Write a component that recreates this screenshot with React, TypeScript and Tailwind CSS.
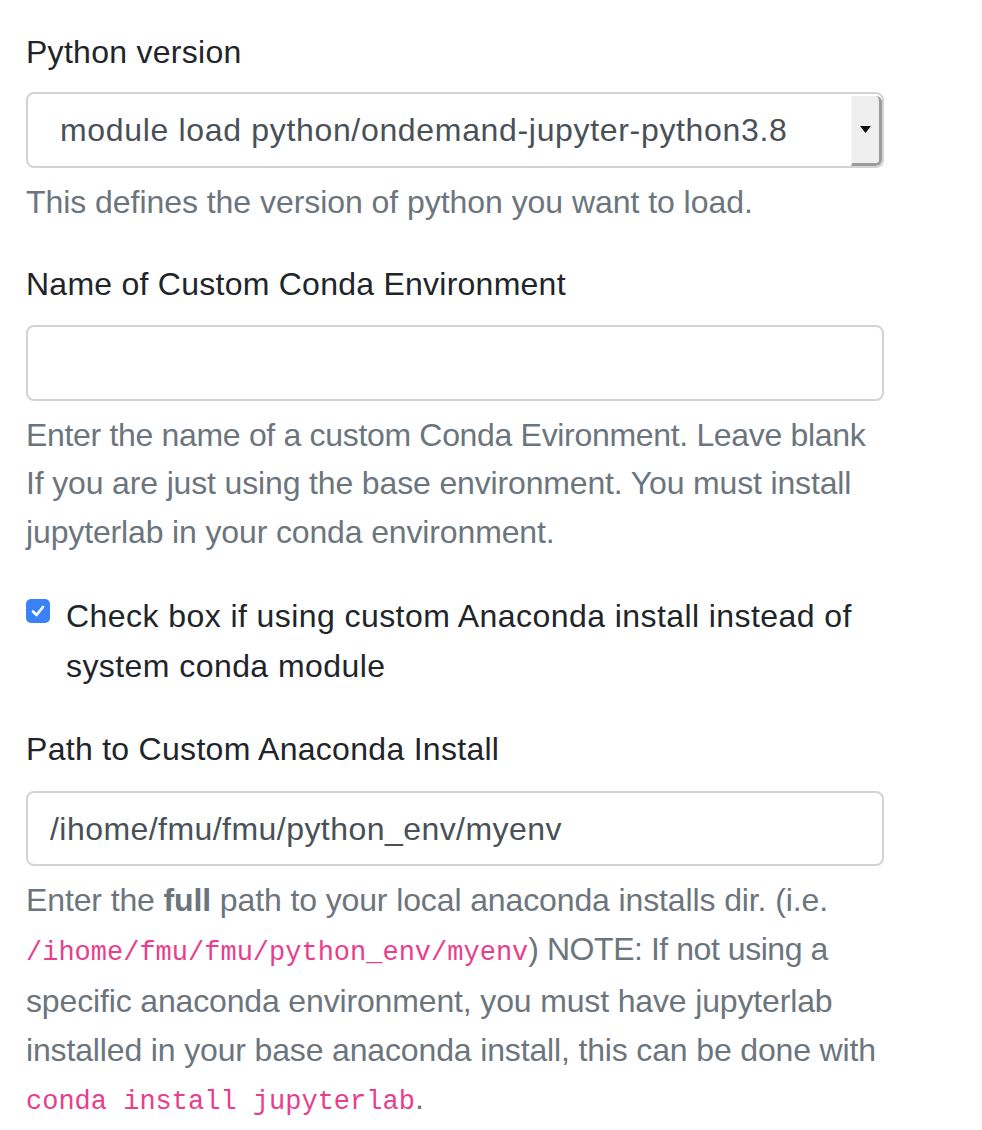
import React from "react";

const codeCls =
  "font-['Liberation_Mono','DejaVu_Sans_Mono',monospace] text-[27px] text-[#e83e8c] tracking-normal";

export default function App() {
  return (
    <div className="min-h-[1130px] w-[982px] bg-white pl-[26px] pt-[28px] font-['Liberation_Sans',Arial,sans-serif] text-[32px] leading-[48px] text-[#212529]">
      {/* Python version */}
      <label className="block tracking-[0.28px]">Python version</label>
      <div className="mt-[16px] flex h-[76px] w-[858px] overflow-hidden rounded-[8px] border-2 border-[#d0d4d9] bg-white">
        <div className="flex flex-1 items-center pl-[32px] tracking-[0.67px] text-[#495057]">
          module load python/ondemand-jupyter-python3.8
        </div>
        <div className="mt-[2px] flex w-[31px] items-center justify-center rounded-r-[6px] border-b-[3px] border-r-[3px] border-l border-l-[#f7f7f7] border-b-[#9c9c9c] border-r-[#9c9c9c] bg-[#efefef]">
          <svg width="11" height="7" viewBox="0 0 11 7">
            <path d="M0 0 L11 0 L5.5 7 Z" fill="#111" />
          </svg>
        </div>
      </div>
      <p className="mt-[10px] leading-[48.5px] tracking-[-0.05px] text-[#6c757d]">
        This defines the version of python you want to load.
      </p>

      {/* Conda env */}
      <label className="mt-[33px] block tracking-[0.25px]">Name of Custom Conda Environment</label>
      <div className="mt-[17px] h-[76px] w-[858px] rounded-[8px] border-2 border-[#d0d4d9] bg-white" />
      <p className="mt-[10px] w-[900px] leading-[48.5px] text-[#6c757d]">
        <span className="tracking-[-0.32px]">Enter the name of a custom Conda Evironment. Leave blank</span>
        <br />
        <span className="tracking-[-0.15px]">If you are just using the base environment. You must install</span>
        <br />
        <span className="tracking-[-0.14px]">jupyterlab in your conda environment.</span>
      </p>

      {/* Checkbox */}
      <div className="mt-[35px] flex items-start gap-[16px]">
        <div className="mt-[8px] flex h-[24px] w-[24px] shrink-0 items-center justify-center rounded-[5px] bg-[#3b82f6]">
          <svg width="16" height="14" viewBox="0 0 16 14">
            <path
              d="M3 7.5 L6.5 11 L13 3"
              fill="none"
              stroke="#fff"
              strokeWidth="2.6"
              strokeLinecap="round"
              strokeLinejoin="round"
            />
          </svg>
        </div>
        <label className="w-[880px] leading-[50px] tracking-[0.43px]">
          Check box if using custom Anaconda install instead of
          <br />
          system conda module
        </label>
      </div>

      {/* Path */}
      <label className="mt-[34px] block tracking-[0.29px]">Path to Custom Anaconda Install</label>
      <div className="mt-[18px] flex h-[75px] w-[858px] items-center rounded-[8px] border-2 border-[#d0d4d9] bg-white pl-[22px] tracking-[0.45px] text-[#495057]">
        /ihome/fmu/fmu/python_env/myenv
      </div>
      <p className="mt-[10px] w-[900px] leading-[48.5px] text-[#6c757d]">
        <span className="tracking-[-0.12px]">
          Enter the <b className="font-bold">full</b> path to your local anaconda installs dir. (i.e.
        </span>
        <br />
        <code className={codeCls}>/ihome/fmu/fmu/python_env/myenv</code>
        <span className="tracking-[-0.45px]">) NOTE: If not using a</span>
        <br />
        <span className="tracking-[-0.15px]">specific anaconda environment, you must have jupyterlab</span>
        <br />
        <span className="tracking-[-0.15px]">installed in your base anaconda install, this can be done with</span>
        <br />
        <code className={codeCls}>conda install jupyterlab</code>.
      </p>
    </div>
  );
}
